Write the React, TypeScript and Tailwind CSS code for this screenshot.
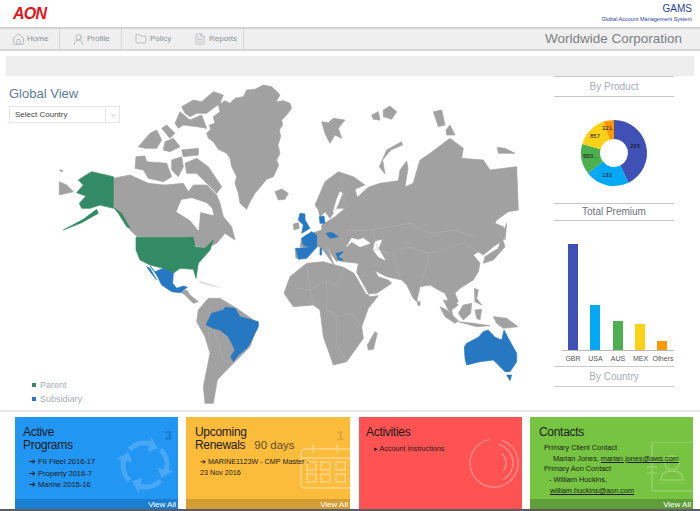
import type { ReactNode } from "react";
import { Home, UserRound, Folder, FileText, ChevronDown } from "lucide-react";

const shift = (dx: number, dy: number) => (s: string) =>
  s.trim().split(/\s+/).map((p) => { const [x, y] = p.split(",").map(Number); return `${x + dx},${y + dy}`; }).join(" ");
const z6 = shift(150, 210);
const z7 = shift(810, 210);
const z8 = shift(390, 690);

const GRAY = "#a1a1a1";
const GREEN = "#338b65";
const BLUE = "#2778c2";

const grayPolys = [
  z6("470,190 482,178 478,165 495,160 490,140 510,125 505,105 525,92 540,100 555,85 580,80 590,60 615,58 640,45 665,50 690,75 678,95 700,92 720,100 725,115 710,135 695,150 698,165 688,180 692,200 684,225 690,250 680,270 686,285 670,320 650,328 640,340 615,370 600,395 590,418 570,400 565,370 555,340 560,320 545,290 540,265 530,250 505,238 490,215 475,205"),
  z6("675,365 695,357 715,370 705,388 685,390"),
  z6("395,110 430,90 455,95 490,65 520,75 510,100 470,130 440,130 420,140 405,130"),
  z6("375,160 390,125 420,150 455,135 470,175 440,170 400,165 385,175"),
  z6("395,240 445,235 445,255 400,260"),
  z6("335,175 350,165 375,190 360,205"),
  z6("300,190 320,180 335,210 320,235 285,235 265,230"),
  z6("345,215 370,205 390,230 360,245 340,240"),
  z6("258,260 285,258 290,275 350,280 365,320 340,335 295,325 280,300 255,295"),
  z6("365,270 395,260 400,290 385,320 365,300"),
  z6("405,280 440,265 475,290 515,350 500,370 470,340 440,310 410,310"),
  z6("190,325 240,315 295,340 345,345 400,340 415,365 430,345 470,345 500,375 510,400 520,440 545,470 555,510 525,490 500,520 465,535 430,525 410,500 262,500 240,480 205,425 190,412"),
  z6("28,335 50,345 70,365 50,370 28,375"),
  z6("28,300 38,300 36,306"),
  z7("155,155 175,158 190,145 225,150 205,175 215,205 195,195 180,220 165,190"),
  z7("305,135 325,125 330,150 310,148"),
  z7("340,120 360,108 380,125 365,148 340,140"),
  z7("395,215 350,240 328,290 345,312 338,270 362,240 397,225"),
  z7("490,125 515,120 525,165 505,170"),
  z7("528,180 540,165 555,195 530,195"),
  z7("682,232 705,235 735,250 705,250 685,250"),
  z7("70,462 85,458 88,475 72,480"),
  z7("75,535 82,535 82,565 78,565"),
  z7("135,405 165,335 205,305 250,320 285,345 255,358 262,382 295,352 330,340 385,332 390,300 410,273 414,295 405,350 430,340 438,310 450,270 480,250 540,205 580,235 575,265 640,270 660,300 740,290 745,420 715,425 680,450 675,460 700,470 705,490 700,510 670,530 640,555") + " " + z8("1045,65 1030,75 1050,100 1045,125 1030,150 990,175 975,190 985,215 960,225 945,190 925,180 900,165 870,170 860,215 850,205 830,165 815,150 770,140 735,122 745,140 775,150 785,160 740,190 715,192 680,128 685,100 640,95 625,92 640,70 620,95 605,75 590,45 612,105 575,55 565,50 530,55 510,50 515,25 530,15 575,0") + " " + z7("155,465 195,440 225,415 200,415 180,445 165,425 150,440 145,420"),
  z8("462,190 480,140 530,100 580,95 640,112 672,130 705,185 720,200 745,197 715,235 695,290 700,325 650,395 610,405 580,320 570,240 550,225 490,230"),
  z8("712,345 735,305 742,310 730,358 715,360"),
  z8("150,185 170,180 180,195 205,215 190,220 165,195"),
  z8("205,240 235,205 270,205 320,235 385,280 360,350 310,400 285,425 262,450 250,520 225,520 220,470 240,370 225,320 200,275"),
  z8("862,215 870,215 870,227 863,225"),
  z8("975,215 985,225 965,240 970,265 955,240 940,210"),
  z8("930,230 950,240 985,272 975,280 945,260"),
  z8("985,275 1030,280 1080,287 1040,290"),
  z8("985,250 1000,225 1025,220 1022,250 1000,270"),
  z8("1033,175 1045,180 1040,205 1055,225 1035,215"),
  z8("1035,240 1055,238 1050,270 1040,265"),
  z8("1090,260 1130,265 1164,290 1120,295 1100,280"),
  z8("1065,80 1105,55 1115,20 1125,50 1090,90 1060,100"),
  z8("1122,0 1130,-20 1125,30"),
];

const faintIslands = [z8("205,150 235,160 280,175 240,168 210,160")];

const whiteSeas = [
  z6("380,425 395,390 425,385 470,400 485,415 490,435 450,425 445,480 420,450"),
  z7("190,425 200,390 210,365 217,370 205,400 192,428"),
  z8("650,50 665,35 690,50 720,40 700,25 685,30 665,25"),
  z8("735,35 755,30 745,55 765,90 745,80 730,60"),
];

const blues = [
  z8("60,108 75,125 100,115 130,130 128,160 140,175 160,168 172,172 150,188 125,185 95,165 80,135"),
  z8("50,110 60,115 80,150 60,125"),
  z8("228,285 245,250 280,240 285,232 315,235 330,260 385,275 385,290 360,340 350,355 325,375 310,395 302,380 315,360 305,340 295,320 270,300 250,295"),
  z8("1003,350 1010,340 1045,322 1060,305 1075,300 1095,322 1115,330 1122,300 1135,325 1160,370 1160,395 1140,425 1125,425 1100,400 1090,390 1050,395 1010,405 1005,385"),
  z8("1130,435 1145,435 1140,452"),
  z7("90,430 105,432 105,450 120,475 95,490 100,465 85,450"),
  z7("95,505 125,485 140,495 140,530 125,535 100,525"),
  z7("78,535 140,532 110,565 85,568"),
  z7("148,440 162,438 165,460 150,460"),
  z7("168,490 185,487 205,500 180,505"),
  z8("618,70 640,65 625,80 640,90 625,90"),
  z7("150,535 155,535 155,555 150,555"),
];

const greens = [
  z6("190,320 125,305 100,320 85,330 100,345 80,368 108,378 88,400 95,415 120,415 150,405 190,415"),
  z6("140,418 100,448 40,480 95,458 145,430"),
  z6("190,412 215,430 240,475 230,470 205,430"),
  z8("18,22 190,22 195,50 225,55 250,30 240,60 205,100 198,145 190,118 150,115 130,130 100,115 60,105 30,90 18,60"),
];

const borders = [
  z8("500,175 540,180 590,150 620,170 640,115"),
  z8("590,150 590,240 620,260 660,250 700,290"),
  z8("530,100 540,180 550,225"),
  z8("620,260 620,340 650,395"),
  z8("200,275 235,290 240,370"),
  z8("250,295 280,390 310,400"),
  z8("700,50 790,70 830,50 900,70 1000,40 1060,75"),
  z8("790,70 810,145"),
  z8("900,70 870,170"),
  z7("225,480 300,480 360,470 420,460 480,490 560,480 610,500"),
  z7("210,320 225,400"),
  z7("310,480 320,530 360,560"),
];

function WorldMap() {
  return (
    <svg className="absolute left-[50px] top-[70px]" width={470} height={340} viewBox="150 210 1410 1020" strokeLinejoin="round">
      {grayPolys.map((p, i) => <polygon key={i} points={p} fill={GRAY} stroke={GRAY} strokeWidth={2} />)}
      {faintIslands.map((p, i) => <polygon key={i} points={p} fill="#e2e2e2" />)}
      {whiteSeas.map((p, i) => <polygon key={i} points={p} fill="#fff" stroke="#fff" strokeWidth={2} />)}
      <polyline points={z8("676,128 712,192")} fill="none" stroke="#fff" strokeWidth={5} />
      {borders.map((p, i) => <polyline key={i} points={p} fill="none" stroke="#b4b4b4" strokeWidth={1.5} />)}
      {greens.map((p, i) => <polygon key={i} points={p} fill={GREEN} stroke={GREEN} strokeWidth={2} />)}
      {blues.map((p, i) => <polygon key={i} points={p} fill={BLUE} stroke={BLUE} strokeWidth={2} />)}
    </svg>
  );
}

const arc = (cx: number, cy: number, r: number, a: number, b: number) => {
  const t = (d: number) => [cx + r * Math.cos((d * Math.PI) / 180), cy + r * Math.sin((d * Math.PI) / 180)];
  const [x1, y1] = t(a);
  const [x2, y2] = t(b);
  return `M${x1} ${y1}A${r} ${r} 0 ${b - a > 180 ? 1 : 0} 1 ${x2} ${y2}`;
};

const polar = (r: number, d: number) => `${r * Math.cos((d * Math.PI) / 180)},${r * Math.sin((d * Math.PI) / 180)}`;

function RecycleIcon() {
  return (
    <svg className="absolute left-[101px] top-[19px]" width={58} height={58} viewBox="-29 -29 58 58">
      {[0, 90, 180, 270].map((rot) => (
        <g key={rot} transform={`rotate(${rot})`}>
          <path d={arc(0, 0, 22, -135, -75)} fill="none" stroke="#49a8f6" strokeWidth={5} />
          <polygon points={`${polar(13, -78)} ${polar(29, -78)} ${polar(21, -52)}`} fill="#49a8f6" />
        </g>
      ))}
    </svg>
  );
}

function Donut() {
  const segs = [
    [-90, 64, "#3f51b5"],
    [64, 142, "#03a9f4"],
    [142, 196, "#4caf50"],
    [196, 252, "#fcd116"],
    [252, 270, "#ff9800"],
  ] as const;
  return (
    <svg width={70} height={70} viewBox="-35 -35 70 70">
      {segs.map(([a, b, c], i) => (
        <path key={i} d={arc(0, 0, 23.5, a, b)} fill="none" stroke={c} strokeWidth={19} />
      ))}
    </svg>
  );
}

const bars = [
  ["GBR", 106, "bg-[#3f51b5]"],
  ["USA", 45, "bg-[#03a9f4]"],
  ["AUS", 29, "bg-[#4caf50]"],
  ["MEX", 26, "bg-[#fcd116]"],
  ["Others", 9, "bg-[#ff9800]"],
] as const;

function Card({ className, strip, children }: { className: string; strip?: string; children: ReactNode }) {
  return (
    <div className={`relative h-full shrink-0 overflow-hidden ${className}`}>
      {children}
      {strip && (
        <div className={`absolute bottom-0 left-0 right-0 h-[10px] pr-[2px] text-right text-[8px] leading-[11px] text-white ${strip}`}>
          View All
        </div>
      )}
    </div>
  );
}

export default function App() {
  return (
    <div className="relative h-[511px] w-[700px] overflow-hidden bg-white font-['Liberation_Sans',sans-serif]">
      <header className="flex h-[27px] items-start justify-between pl-[13px] pr-[8px]">
        <div className="mt-[5px] text-[16px] font-bold italic leading-[18px] tracking-[-0.8px] text-[#e8141c]">AON</div>
        <div className="pt-[4px] text-right">
          <div className="text-[10px] leading-[10px] text-[#1f3f99]">GAMS</div>
          <div className="mt-[2px] text-[5.5px] leading-[7px] text-[#1f3f99]">Global Account Management System</div>
        </div>
      </header>
      <nav className="flex h-[24px] items-center justify-between border-y-2 border-t-[#d2d2d2] border-b-[#d8d8d8] bg-[#efefef] pr-[18px]">
        <div className="flex h-full text-[8px] text-[#8a8f95]">
          <div className="flex w-[60px] items-center gap-[2px] border-r border-[#d8d8d8] pl-[12px]"><Home size={13} strokeWidth={1} />Home</div>
          <div className="flex w-[62px] items-center gap-[2px] border-r border-[#d8d8d8] pl-[12px]"><UserRound size={13} strokeWidth={1} />Profile</div>
          <div className="flex w-[58px] items-center gap-[3px] pl-[13px]"><Folder size={12} strokeWidth={1} />Policy</div>
          <div className="flex w-[64px] items-center gap-[3px] border-r border-[#d8d8d8] pl-[14px]"><FileText size={12} strokeWidth={1} />Reports</div>
        </div>
        <div className="text-[13.5px] text-[#7c7f82]">Worldwide Corporation</div>
      </nav>
      <div className="mx-[6px] mt-[5px] h-[20px] bg-[#ededed]" />
      <WorldMap />
      <main className="relative flex h-[330px] justify-between pl-[9px] pr-[26px]">
        <div>
          <h1 className="mt-[10px] text-[13px] leading-[16px] text-[#5b7d95]">Global View</h1>
          <div className="mt-[4px] flex h-[17px] w-[111px] items-center border border-[#e6e6e6] bg-white text-[8px] text-[#444]">
            <span className="flex-1 pl-[5px]">Select Country</span>
            <span className="flex h-full w-[14px] items-center justify-center border-l border-[#e6e6e6] text-[#bbb]"><ChevronDown size={8} /></span>
          </div>
          <div className="ml-[23px] mt-[255px] text-[9px] leading-[14px] text-[#a8adb3]">
            <div className="flex items-center gap-[4px]"><span className="h-[4px] w-[4px] bg-[#338b65]" />Parent</div>
            <div className="flex items-center gap-[4px]"><span className="h-[4px] w-[4px] bg-[#2778c2]" />Subsidiary</div>
          </div>
        </div>
        <aside className="flex w-[120px] flex-col">
          <div className="h-[21px] border-y border-[#c9c9c9] text-center text-[10px] leading-[19px] text-[#a6adb8]">By Product</div>
          <div className="relative flex h-[106px] items-center justify-center pt-[6px] text-[6px] leading-[7px] text-[#111]">
            <Donut />
            <span className="absolute left-[76px] top-[46px]">265</span>
            <span className="absolute left-[48px] top-[75px]">133</span>
            <span className="absolute left-[29px] top-[56px]">950...</span>
            <span className="absolute left-[36px] top-[36px]">857</span>
            <span className="absolute left-[48px] top-[28px]">321..</span>
          </div>
          <div className="h-[18px] border-y border-[#c9c9c9] text-center text-[10px] leading-[16px] text-[#6d7278]">Total Premium</div>
          <div className="ml-[8px] mt-[24px] flex h-[106px] items-end justify-between border-b border-[#bbb] pl-[6px] pr-[7px]">
            {bars.map(([, h, c], i) => <div key={i} className={`w-[10px] ${c}`} style={{ height: h }} />)}
          </div>
          <div className="ml-[8px] flex h-[15px] justify-between text-[7px] leading-[16px] text-[#555]">
            {bars.map(([l]) => <span key={l} className="w-[22px] text-center">{l}</span>)}
          </div>
          <div className="h-[21px] border-y border-[#c9c9c9] text-center text-[10px] leading-[19px] text-[#a6adb8]">By Country</div>
        </aside>
      </main>
      <div className="mt-[4px] h-[2px] bg-[#e8e8e8]" />
      <section className="mt-[5px] flex h-[92px] pl-[15px] text-[#1c1c1c]">
        <Card className="w-[163px] bg-[#2196f3]" strip="bg-[#1a7fd0]">
          <div className="absolute right-[6px] top-[9px] text-[13px] font-bold text-[#1976c9]">3</div>
          <RecycleIcon />
          <div className="relative pl-[8px] pt-[9px] text-[12px] leading-[12.5px] tracking-[-0.3px]">Active<br />Programs</div>
          <ul className="relative mt-[5px] pl-[14px] text-[7.5px] leading-[11.5px]">
            <li>➔ FII Fleet 2016-17</li><li>➔ Property 2016-7</li><li>➔ Marine 2015-16</li>
          </ul>
        </Card>
        <Card className="ml-[8px] w-[164px] bg-[#fbbb3b]" strip="bg-[#d49e35]">
          <div className="absolute right-[6px] top-[9px] text-[13px] font-bold text-[#dfa436]">1</div>
          <svg className="absolute left-[114px] top-[28px]" width={50} height={44} viewBox="0 0 50 44" fill="none" stroke="#fdd58a" strokeWidth={1.5}>
            <rect x="1" y="4" width="52" height="39" rx="4" /><path d="M1 13H50M13 0V8M37 0V8" />
            <rect x="7" y="17" width="9" height="8" /><rect x="21" y="17" width="9" height="8" /><rect x="36" y="17" width="9" height="8" />
            <rect x="7" y="29" width="9" height="8" /><rect x="21" y="29" width="9" height="8" /><rect x="36" y="29" width="9" height="8" />
          </svg>
          <div className="relative pl-[9px] pt-[9px] text-[12px] leading-[12.5px] tracking-[-0.3px]">Upcoming<br />Renewals <span className="ml-[6px] text-[11.5px] tracking-normal text-[#5a5034]">90 days</span></div>
          <div className="relative mt-[5px] pl-[14px] text-[7.2px] leading-[11px]">➔ MARINE1123W - CMP Master -</div>
          <div className="relative pl-[14px] text-[7.2px] leading-[11px]">23 Nov 2016</div>
        </Card>
        <Card className="ml-[9px] w-[163px] bg-[#ff5252]">
          <svg className="absolute left-[108px] top-[19px]" width={54} height={54} viewBox="-27 -27 54 54" fill="none" stroke="#fb8a86" strokeWidth={1.5}>
            <path d={arc(0, 0, 24, -70, 260)} /><path d={arc(0, 0, 19, -75, 60)} /><path d={arc(0, 0, 12, -50, 40)} />
          </svg>
          <div className="relative pl-[7px] pt-[8px] text-[12px] leading-[14px] tracking-[-0.3px]">Activities</div>
          <div className="relative mt-[5px] pl-[15px] text-[7.2px] leading-[10px]">▸ Account Instructions</div>
        </Card>
        <Card className="ml-[8px] w-[163px] bg-[#76c442]" strip="bg-[#5f9e38]">
          <svg className="absolute left-[117px] top-[25px]" width={46} height={50} viewBox="0 0 46 50" fill="none" stroke="#93d26a" strokeWidth={1.5}>
            <rect x="5" y="0" width="45" height="49" rx="3" /><circle cx="25" cy="21" r="7" /><path d="M14 38c0-8 6-9 11-9s11 1 11 9zM0 19H10M0 25H10M0 31H10" />
          </svg>
          <div className="relative pl-[9px] pt-[8px] text-[12px] leading-[14px] tracking-[-0.3px]">Contacts</div>
          <div className="relative mt-[4px] pl-[14px] text-[7.3px] leading-[10.7px]">
            <div>Primary Client Contact</div>
            <div className="pl-[9px]">Marian Jones, <u>marian.jones@aws.com</u></div>
            <div>Primary Aon Contact</div>
            <div className="pl-[5px]">- William Huckins,</div>
            <div className="pl-[6px]"><u>william.huckins@aon.com</u></div>
          </div>
        </Card>
      </section>
      <div className="h-[2px] bg-[#5c5d62]" />
    </div>
  );
}
